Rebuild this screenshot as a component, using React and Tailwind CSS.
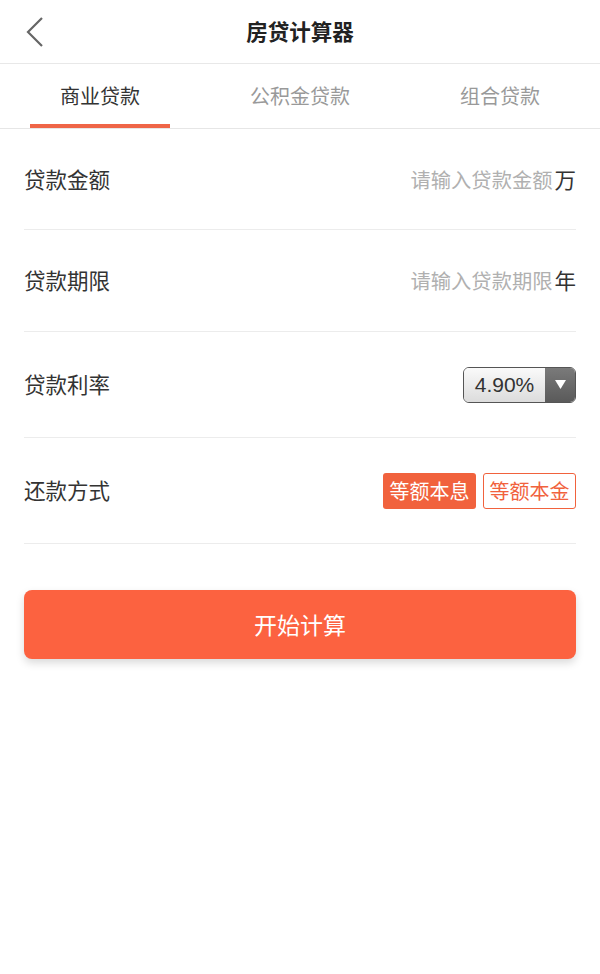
const font = { fontFamily: '"Noto Sans CJK SC", "Liberation Sans", sans-serif' };

const Row = ({ label, children, h }) => (
  <div className={`mx-6 flex items-center justify-between border-b border-[#ececec] ${h}`}>
    <span className="text-[21.5px] text-[#333]">{label}</span>
    <div className="flex items-center">{children}</div>
  </div>
);

export default function App() {
  return (
    <div className="min-h-[974px] bg-white" style={font}>
      <div className="relative flex h-[64px] items-center justify-center border-b border-[#e8e8e8]">
        <svg className="absolute left-[25px] top-[16px]" width="20" height="32" viewBox="0 0 20 32">
          <path d="M17 2 L3 16 L17 30" fill="none" stroke="#666" strokeWidth="2.2" />
        </svg>
        <h1 className="text-[21.5px] font-bold text-[#222]">房贷计算器</h1>
      </div>

      <div className="grid h-[65px] grid-cols-3 border-b border-[#e6e6e6]">
        <div className="relative flex items-center justify-center">
          <span className="text-[20px] text-[#333]">商业贷款</span>
          <div className="absolute bottom-0 left-[30px] h-[4px] w-[140px] bg-[#ef6547]" />
        </div>
        <div className="flex items-center justify-center">
          <span className="text-[20px] text-[#999]">公积金贷款</span>
        </div>
        <div className="flex items-center justify-center">
          <span className="text-[20px] text-[#999]">组合贷款</span>
        </div>
      </div>

      <Row label="贷款金额" h="h-[101px]">
        <span className="mr-[2px] text-[20.3px] text-[#b0b0b0]">请输入贷款金额</span>
        <span className="text-[21.5px] text-[#333]">万</span>
      </Row>
      <Row label="贷款期限" h="h-[102px]">
        <span className="mr-[2px] text-[20.3px] text-[#b0b0b0]">请输入贷款期限</span>
        <span className="text-[21.5px] text-[#333]">年</span>
      </Row>
      <Row label="贷款利率" h="h-[106px]">
        <div className="flex h-[36px] w-[113px] overflow-hidden rounded-[6px] border border-[#555]">
          <div className="flex flex-1 items-center justify-center bg-gradient-to-b from-[#fafafa] to-[#dcdcdc] text-[21px] text-[#333]" style={{ fontFamily: '"Liberation Sans", sans-serif' }}>
            4.90%
          </div>
          <div className="flex w-[30px] items-center justify-center bg-gradient-to-b from-[#7a7a7a] to-[#5a5a5a]">
            <svg width="11" height="9" viewBox="0 0 11 9">
              <path d="M0 0 H11 L5.5 9 Z" fill="#fff" />
            </svg>
          </div>
        </div>
      </Row>
      <Row label="还款方式" h="h-[106px]">
        <div className="flex gap-[7px]">
          <span className="flex h-[36px] w-[93px] items-center justify-center rounded-[3px] bg-[#f1623d] text-[20px] text-white">等额本息</span>
          <span className="flex h-[36px] w-[93px] items-center justify-center rounded-[3px] border border-[#f1623d] text-[20px] text-[#f1623d]">等额本金</span>
        </div>
      </Row>

      <div className="px-6 pt-[46px]">
        <button className="flex h-[69px] w-full items-center justify-center rounded-[8px] bg-[#fc6240] text-[23px] text-white shadow-[0_4px_8px_rgba(0,0,0,0.15)]">
          开始计算
        </button>
      </div>
    </div>
  );
}
